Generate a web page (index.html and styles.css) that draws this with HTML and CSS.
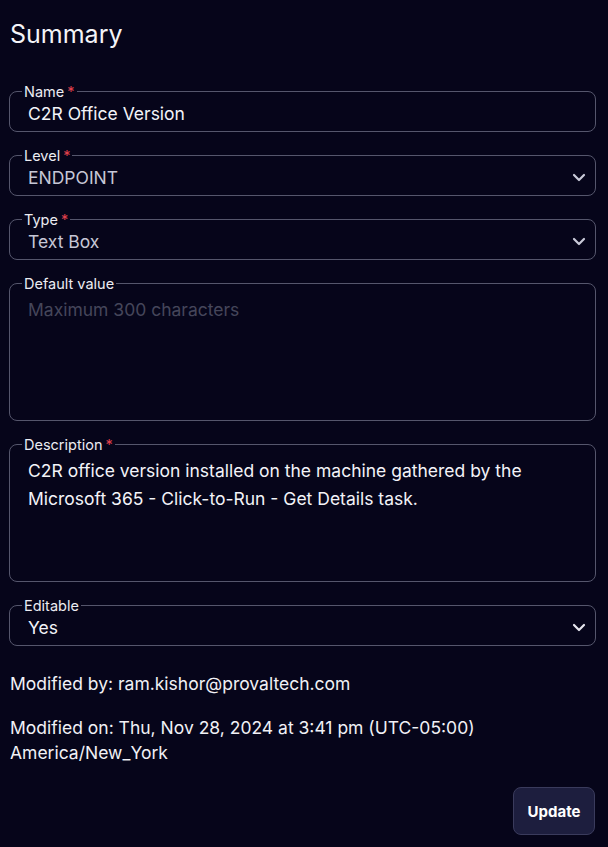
FILE: index.html
```html
<!DOCTYPE html>
<html lang="en">
<head>
<meta charset="utf-8">
<title>Summary</title>
<link rel="stylesheet" href="styles.css">
</head>
<body>
<main class="page">
  <h1 class="title">Summary</h1>
  <form class="form">
    <fieldset class="field">
      <legend class="label">Name<span class="req">*</span></legend>
      <input class="control" type="text" value="C2R Office Version">
    </fieldset>
    <fieldset class="field">
      <legend class="label">Level<span class="req">*</span></legend>
      <div class="select-row">
        <select class="control muted"><option>ENDPOINT</option></select>
        <svg class="chev" width="14" height="9" viewBox="0 0 14 9"><path d="M2 2l5 5 5-5" fill="none" stroke="#c9cad8" stroke-width="2.2" stroke-linecap="round" stroke-linejoin="round"/></svg>
      </div>
    </fieldset>
    <fieldset class="field">
      <legend class="label">Type<span class="req">*</span></legend>
      <div class="select-row">
        <select class="control muted"><option>Text Box</option></select>
        <svg class="chev" width="14" height="9" viewBox="0 0 14 9"><path d="M2 2l5 5 5-5" fill="none" stroke="#c9cad8" stroke-width="2.2" stroke-linecap="round" stroke-linejoin="round"/></svg>
      </div>
    </fieldset>
    <fieldset class="field">
      <legend class="label">Default value</legend>
      <textarea class="area" placeholder="Maximum 300 characters"></textarea>
    </fieldset>
    <fieldset class="field">
      <legend class="label">Description<span class="req">*</span></legend>
      <textarea class="area">C2R office version installed on the machine gathered by the Microsoft 365 - Click-to-Run - Get Details task.</textarea>
    </fieldset>
    <fieldset class="field">
      <legend class="label">Editable</legend>
      <div class="select-row">
        <select class="control"><option>Yes</option></select>
        <svg class="chev" width="14" height="9" viewBox="0 0 14 9"><path d="M2 2l5 5 5-5" fill="none" stroke="#e6e6ee" stroke-width="2.2" stroke-linecap="round" stroke-linejoin="round"/></svg>
      </div>
    </fieldset>
  </form>
  <p class="meta meta-by">Modified by: ram.kishor@provaltech.com</p>
  <p class="meta meta-on">Modified on: Thu, Nov 28, 2024 at 3:41 pm (UTC-05:00)<br>America/New_York</p>
  <div class="actions">
    <button class="btn" type="button">Update</button>
  </div>
</main>
</body>
</html>
```
FILE: styles.css
```css
html, body {
  margin: 0;
  padding: 0;
  background: #06051a;
}
body {
  font-family: Inter, "Noto Sans", sans-serif;
  color: #f1f1f6;
}
.page {
  padding: 19px 12px 12px 9px;
}
.title {
  margin: 0 0 34px 1px;
  font-size: 25px;
  line-height: 30px;
  font-weight: 400;
  color: #f4f4f8;
}
.form {
  display: flex;
  flex-direction: column;
  gap: 15px;
}
.field {
  margin: 0;
  min-width: 0;
  border: 1px solid #55566c;
  border-radius: 8px;
  padding: 0 12px 6px 12px;
}
.label {
  padding: 0 2px;
  font-size: 14.5px;
  line-height: 17px;
  color: #ececf2;
}
.req {
  color: #e0404c;
  margin-left: 3px;
}
.control {
  display: block;
  width: 100%;
  box-sizing: border-box;
  margin: 0;
  border: 0;
  outline: none;
  background: transparent;
  font-family: inherit;
  font-size: 17.5px;
  line-height: 23px;
  height: 25px;
  padding: 2px 0 0 6px;
  color: #f3f3f8;
  appearance: none;
  -webkit-appearance: none;
}
.muted {
  color: #c6c7d6;
}
.select-row {
  display: flex;
  align-items: center;
}
.select-row .control {
  flex: 1;
}
.chev {
  flex: none;
  margin-right: -3px;
  margin-top: 2px;
}
.area {
  display: block;
  width: 100%;
  height: 122px;
  box-sizing: border-box;
  margin: 0;
  border: 0;
  outline: none;
  resize: none;
  background: transparent;
  font-family: inherit;
  font-size: 17.5px;
  line-height: 28px;
  padding: 4px 10px 0 6px;
  color: #f3f3f8;
  overflow: hidden;
}
.area::placeholder {
  color: #45465a;
}
.meta {
  margin: 0;
  padding-left: 1px;
  font-size: 17.5px;
  line-height: 25px;
  color: #f1f1f6;
}
.meta-by {
  margin-top: 25px;
}
.meta-on {
  margin-top: 19px;
}
.actions {
  display: flex;
  justify-content: flex-end;
  margin-top: 22px;
}
.btn {
  width: 82px;
  height: 48px;
  margin-right: 1px;
  border: 1px solid #3a3b5c;
  border-radius: 8px;
  background: #1d1e3e;
  color: #ffffff;
  font-family: inherit;
  font-size: 15px;
  font-weight: 700;
}
```
